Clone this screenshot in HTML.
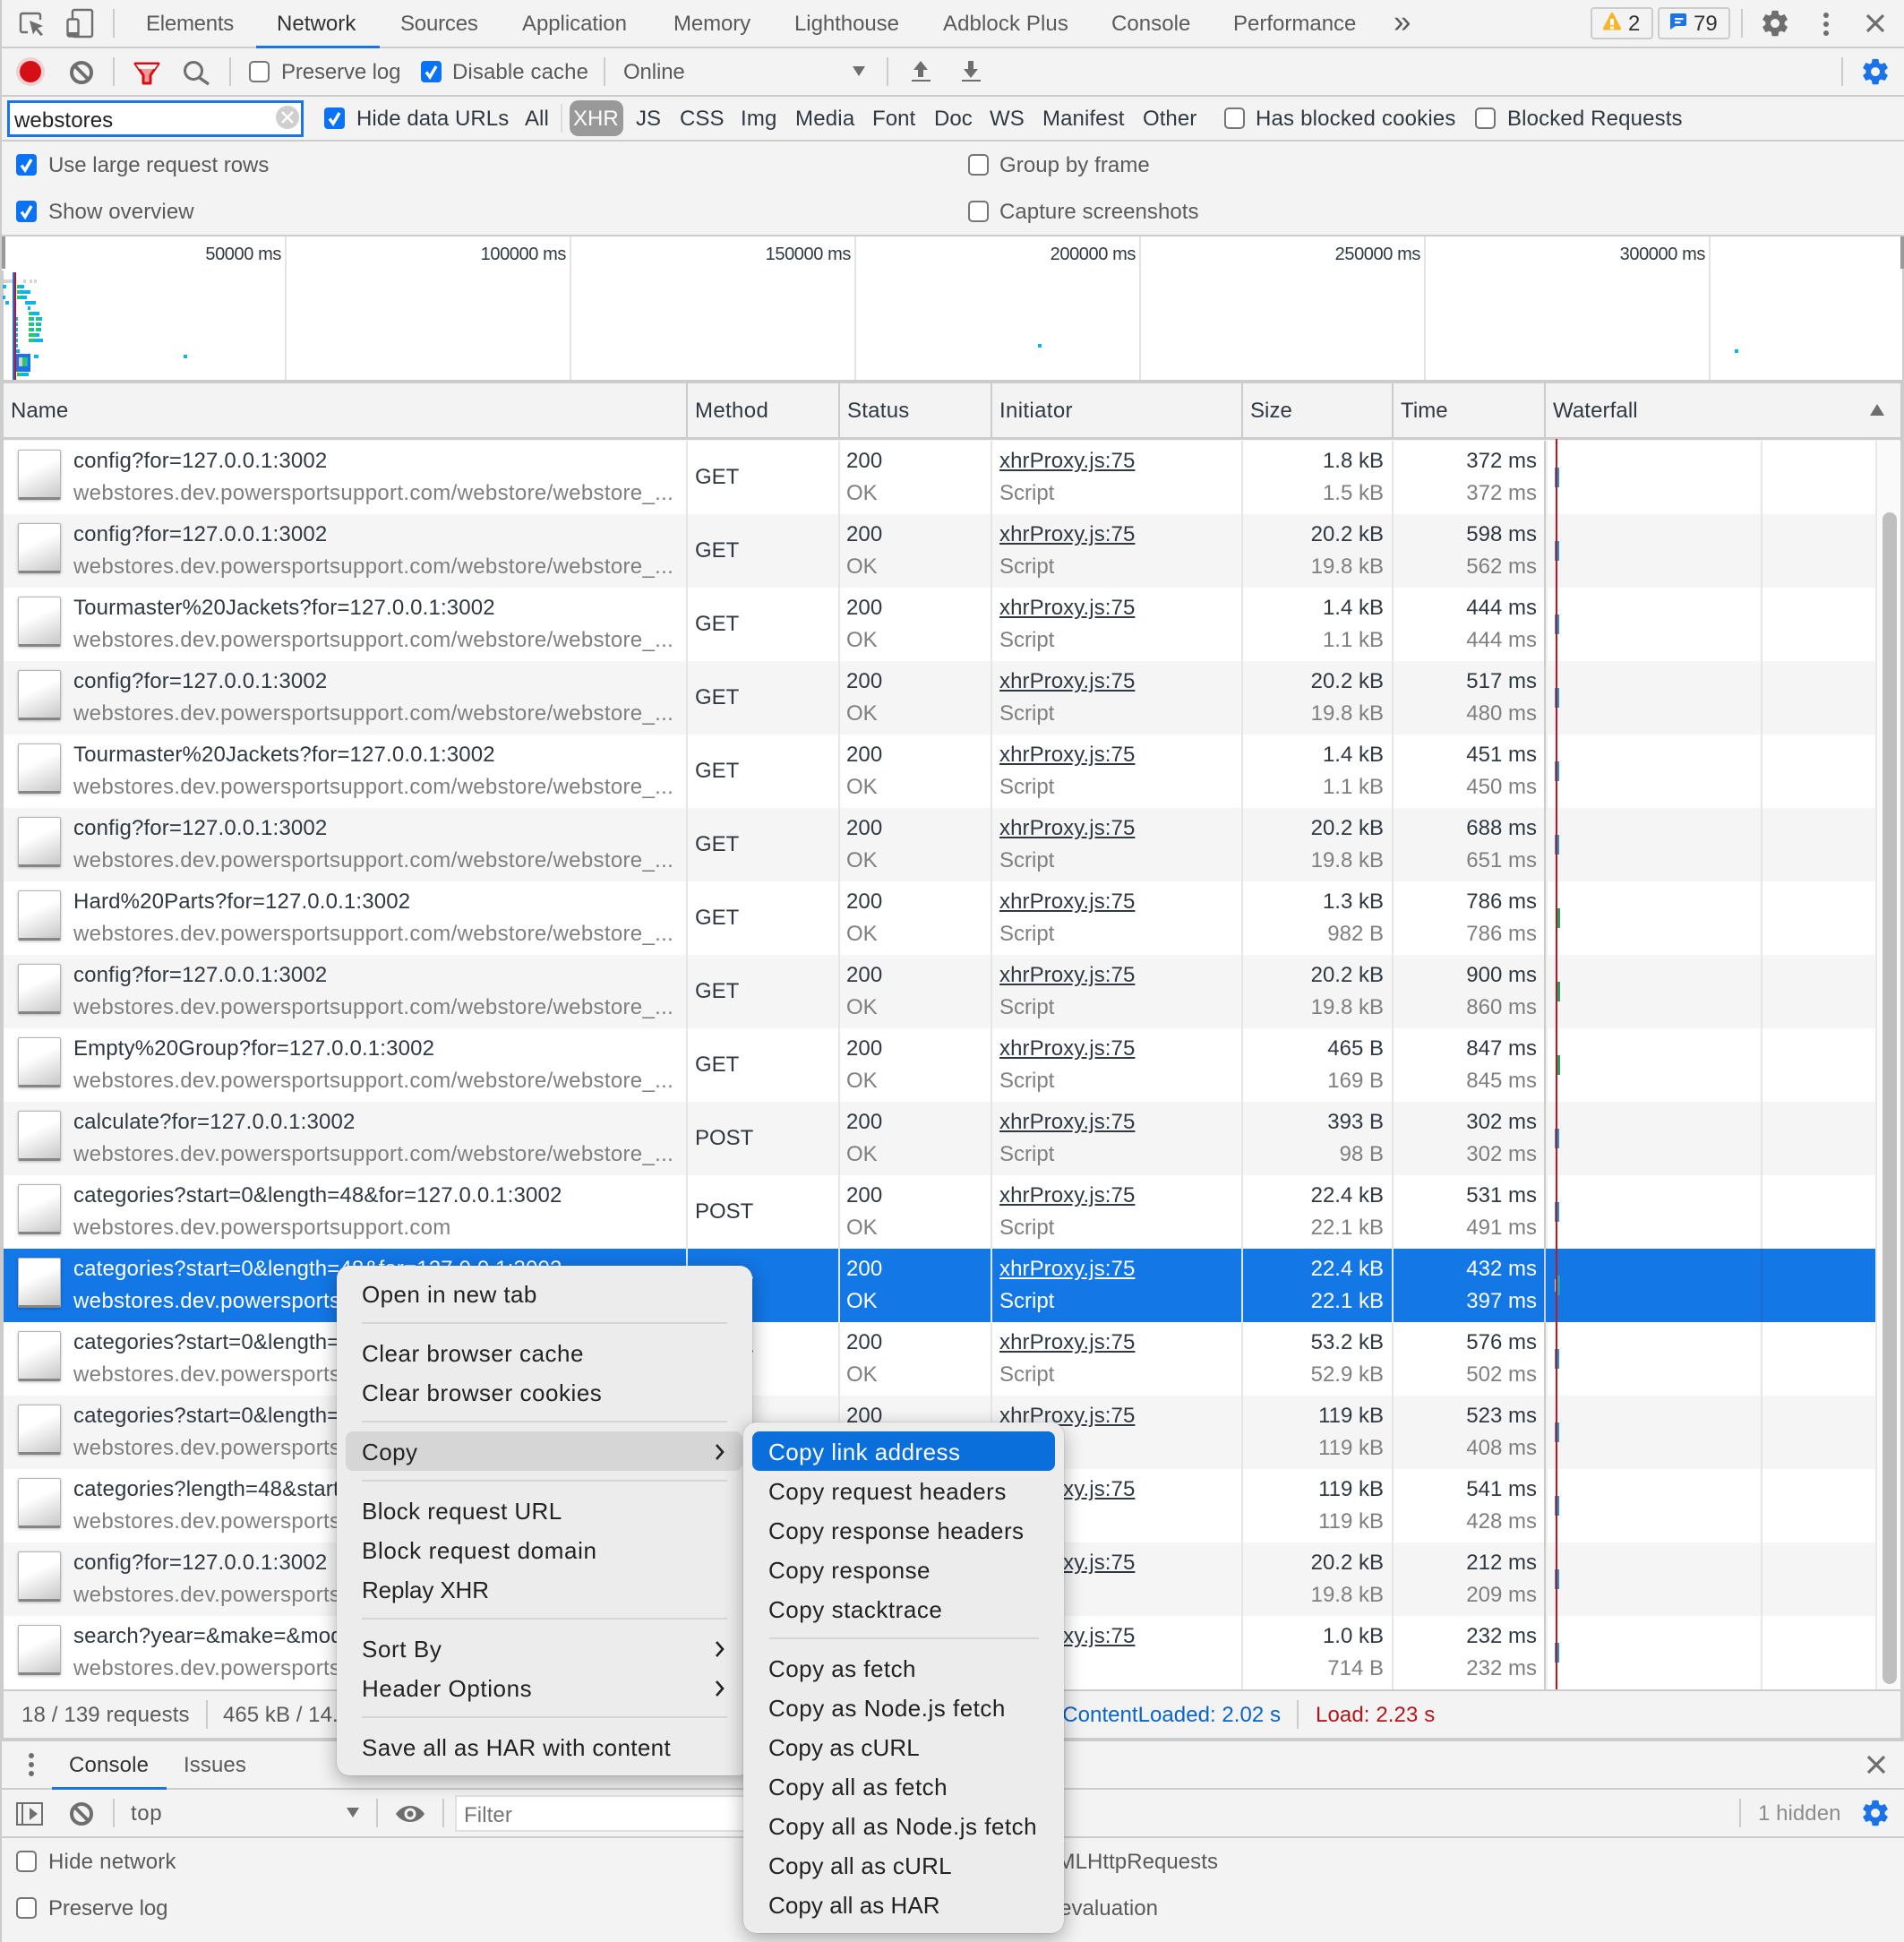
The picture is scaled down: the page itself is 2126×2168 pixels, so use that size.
<!DOCTYPE html>
<html><head><meta charset="utf-8"><title>DevTools Network</title>
<style>
html,body{margin:0;padding:0}
body{position:relative;width:2126px;height:2168px;overflow:hidden;background:#f3f3f3;font-family:"Liberation Sans",Arial,sans-serif;font-size:24px;color:#303942}
.t{position:absolute;white-space:nowrap;line-height:28px;height:28px;z-index:3;transform:translateY(1px)}
.b{position:absolute;z-index:2}
.tab{color:#5a5a5a;letter-spacing:-.05px}
.g{color:#5a5a5a;letter-spacing:.05px}
.k{color:#303942;letter-spacing:.05px}
.o{font-size:20px;letter-spacing:-.4px;width:150px;text-align:right;color:#303942}
.r{position:absolute;left:0;width:2094px;height:82px;background:#fff;z-index:1}
.r.e{background:#f5f5f5}
.r span{position:absolute;white-space:nowrap;line-height:28px;transform:translateY(1px)}
.n{left:82px;top:8px;letter-spacing:.15px}
.u{left:82px;top:44px;color:#7f7f7f;width:680px;overflow:hidden;letter-spacing:.32px}
.m{left:776px;top:26px}
.s1{left:945px;top:8px;letter-spacing:.08px}.s2{left:945px;top:44px;color:#7f7f7f}
.i1{left:1116px;top:8px;text-decoration:underline;letter-spacing:.08px}.i2{left:1116px;top:44px;color:#7f7f7f}
.z1{left:1395px;width:150px;top:8px;text-align:right}.z2{left:1395px;width:150px;top:44px;text-align:right;color:#7f7f7f}
.e1{left:1566px;width:150px;top:8px;text-align:right}.e2{left:1566px;width:150px;top:44px;text-align:right;color:#7f7f7f}
.r i{position:absolute;left:20px;top:10px;width:46px;height:52px;background:linear-gradient(155deg,#fff 40%,#c8c8c8 100%);border:1px solid #b4b4b4;border-bottom:3px solid #858585;border-radius:2px;box-shadow:0 1px 3px rgba(0,0,0,.25)}
.r b{position:absolute;left:1736px;top:30px;width:5px;height:22px;background:#1a9bd7}
.r b.gr{background:#1fa565;left:1738px;width:4px}
.sel{background:#1377e6;color:#fff}
.sel span{color:#fff!important}
.menu{position:absolute;background:#ececec;border-radius:14px;box-shadow:0 6px 22px rgba(0,0,0,.32),0 0 1px rgba(0,0,0,.4);z-index:6}
.mi{position:absolute;white-space:nowrap;line-height:32px;font-size:26px;letter-spacing:.43px;color:#222;z-index:8}
.ms{position:absolute;height:2px;background:#d6d6d6;z-index:8}
.hl{position:absolute;border-radius:8px;z-index:7}
svg.layer{position:absolute;left:0;top:0;z-index:2}
svg.top{position:absolute;left:0;top:0;z-index:8}
</style></head><body>

<!-- Backgrounds and bars -->
<div class="b" style="left:286px;top:51px;width:138px;height:3px;background:#1a73e8;z-index:3"></div>
<div class="b" style="left:0;top:52px;width:2126px;height:2px;background:#ccc"></div>
<div class="b" style="left:0;top:106px;width:2126px;height:2px;background:#ccc"></div>
<div class="b" style="left:0;top:156px;width:2126px;height:2px;background:#ccc"></div>
<div class="b" style="left:0;top:262px;width:2126px;height:2px;background:#ccc"></div>
<div class="b" style="left:0;top:264px;width:2126px;height:160px;background:#fff;z-index:1"></div>
<div class="b" style="left:0;top:424px;width:2126px;height:4px;background:#ccc"></div>
<div class="b" style="left:0;top:488px;width:2126px;height:3px;background:#ccc"></div>
<div class="b" style="left:2094px;top:492px;width:32px;height:1394px;background:#fafafa;z-index:1"></div>
<div class="b" style="left:2094px;top:492px;width:2px;height:1394px;background:#e8e8e8"></div>
<div class="b" style="left:2102px;top:572px;width:16px;height:1308px;background:#bfbfbf;border-radius:8px"></div>
<div class="b" style="left:0;top:1886px;width:2126px;height:2px;background:#ccc"></div>
<div class="b" style="left:0;top:1940px;width:2126px;height:4px;background:#ccc"></div>
<div class="b" style="left:0;top:1996px;width:2126px;height:2px;background:#ccc"></div>
<div class="b" style="left:58px;top:1995px;width:128px;height:3px;background:#1a73e8"></div>
<div class="b" style="left:0;top:2050px;width:2126px;height:2px;background:#ccc"></div>
<div class="b" style="left:0;top:0;width:2px;height:2168px;background:#ccc;z-index:4"></div>
<div class="b" style="left:0;top:302px;width:4px;height:1642px;background:#ccc;z-index:4"></div>
<div class="b" style="left:2122px;top:428px;width:4px;height:1516px;background:#ccc;z-index:4"></div>
<div class="b" style="left:2124px;top:264px;width:2px;height:164px;background:#ccc;z-index:4"></div>

<!-- Overview grid -->
<div class="b" style="left:318px;top:264px;width:2px;height:160px;background:#e4e4e4"></div>
<div class="b" style="left:636px;top:264px;width:2px;height:160px;background:#e4e4e4"></div>
<div class="b" style="left:954px;top:264px;width:2px;height:160px;background:#e4e4e4"></div>
<div class="b" style="left:1272px;top:264px;width:2px;height:160px;background:#e4e4e4"></div>
<div class="b" style="left:1590px;top:264px;width:2px;height:160px;background:#e4e4e4"></div>
<div class="b" style="left:1908px;top:264px;width:2px;height:160px;background:#e4e4e4"></div>
<div class="b" style="left:2px;top:264px;width:4px;height:36px;background:#999;z-index:4"></div>
<div class="b" style="left:2122px;top:264px;width:4px;height:36px;background:#999;z-index:4"></div>

<!-- Top tabs -->
<span class="t tab" style="left:163px;top:12px;letter-spacing:-.25px">Elements</span>
<span class="t tab" style="left:309px;top:12px;color:#333;letter-spacing:.05px">Network</span>
<span class="t tab" style="left:447px;top:12px;letter-spacing:-.2px">Sources</span>
<span class="t tab" style="left:583px;top:12px">Application</span>
<span class="t tab" style="left:752px;top:12px;letter-spacing:-.1px">Memory</span>
<span class="t tab" style="left:887px;top:12px">Lighthouse</span>
<span class="t tab" style="left:1053px;top:12px;letter-spacing:.1px">Adblock Plus</span>
<span class="t tab" style="left:1241px;top:12px;letter-spacing:.05px">Console</span>
<span class="t tab" style="left:1377px;top:12px;letter-spacing:0">Performance</span>
<span class="t tab" style="left:1556px;top:10px;font-size:35px">»</span>
<div class="b" style="left:1776px;top:8px;width:66px;height:32px;border:2px solid #ccc;border-radius:4px"></div>
<div class="b" style="left:1851px;top:8px;width:77px;height:32px;border:2px solid #ccc;border-radius:4px"></div>
<span class="t" style="left:1818px;top:12px;color:#333">2</span>
<span class="t" style="left:1891px;top:12px;color:#333">79</span>

<!-- Network toolbar -->
<span class="t g" style="left:314px;top:66px;letter-spacing:-.12px">Preserve log</span>
<span class="t g" style="left:505px;top:66px;letter-spacing:.1px">Disable cache</span>
<span class="t g" style="left:696px;top:66px;letter-spacing:-.12px">Online</span>

<!-- Filter bar -->
<div class="b" style="left:8px;top:112px;width:325px;height:35px;background:#fff;border:3px solid #1a73e8"></div>
<span class="t" style="left:16px;top:120px;color:#222;letter-spacing:.1px">webstores</span>
<span class="t k" style="left:398px;top:118px;letter-spacing:.06px">Hide data URLs</span>
<span class="t k" style="left:586px;top:118px">All</span>
<div class="b" style="left:636px;top:112px;width:60px;height:40px;background:#999;border-radius:10px"></div>
<span class="t" style="left:640px;top:118px;color:#fff">XHR</span>
<span class="t k" style="left:710px;top:118px">JS</span>
<span class="t k" style="left:759px;top:118px">CSS</span>
<span class="t k" style="left:827px;top:118px;letter-spacing:.2px">Img</span>
<span class="t k" style="left:888px;top:118px;letter-spacing:.2px">Media</span>
<span class="t k" style="left:974px;top:118px">Font</span>
<span class="t k" style="left:1043px;top:118px">Doc</span>
<span class="t k" style="left:1105px;top:118px">WS</span>
<span class="t k" style="left:1164px;top:118px;letter-spacing:.1px">Manifest</span>
<span class="t k" style="left:1276px;top:118px">Other</span>
<span class="t k" style="left:1402px;top:118px;letter-spacing:.18px">Has blocked cookies</span>
<span class="t k" style="left:1683px;top:118px;letter-spacing:.14px">Blocked Requests</span>

<!-- Settings -->
<span class="t g" style="left:54px;top:170px;letter-spacing:-.02px">Use large request rows</span>
<span class="t g" style="left:54px;top:222px;letter-spacing:.1px">Show overview</span>
<span class="t g" style="left:1116px;top:170px;letter-spacing:.08px">Group by frame</span>
<span class="t g" style="left:1116px;top:222px;letter-spacing:.06px">Capture screenshots</span>

<!-- Overview labels -->
<span class="t o" style="left:164px;top:269px">50000 ms</span>
<span class="t o" style="left:482px;top:269px">100000 ms</span>
<span class="t o" style="left:800px;top:269px">150000 ms</span>
<span class="t o" style="left:1118px;top:269px">200000 ms</span>
<span class="t o" style="left:1436px;top:269px">250000 ms</span>
<span class="t o" style="left:1754px;top:269px">300000 ms</span>

<!-- Table header -->
<span class="t k" style="left:12px;top:444px">Name</span>
<span class="t k" style="left:776px;top:444px;letter-spacing:.35px">Method</span>
<span class="t k" style="left:946px;top:444px;letter-spacing:.25px">Status</span>
<span class="t k" style="left:1116px;top:444px;letter-spacing:.35px">Initiator</span>
<span class="t k" style="left:1396px;top:444px">Size</span>
<span class="t k" style="left:1564px;top:444px">Time</span>
<span class="t k" style="left:1734px;top:444px;letter-spacing:.1px">Waterfall</span>

<!-- Rows -->
<div class="r" style="top:492px"><i></i><span class="n">config?for=127.0.0.1:3002</span><span class="u">webstores.dev.powersportsupport.com/webstore/webstore_...</span><span class="m">GET</span><span class="s1">200</span><span class="s2">OK</span><span class="i1">xhrProxy.js:75</span><span class="i2">Script</span><span class="z1">1.8 kB</span><span class="z2">1.5 kB</span><span class="e1">372 ms</span><span class="e2">372 ms</span><b></b></div>
<div class="r e" style="top:574px"><i></i><span class="n">config?for=127.0.0.1:3002</span><span class="u">webstores.dev.powersportsupport.com/webstore/webstore_...</span><span class="m">GET</span><span class="s1">200</span><span class="s2">OK</span><span class="i1">xhrProxy.js:75</span><span class="i2">Script</span><span class="z1">20.2 kB</span><span class="z2">19.8 kB</span><span class="e1">598 ms</span><span class="e2">562 ms</span><b></b></div>
<div class="r" style="top:656px"><i></i><span class="n">Tourmaster%20Jackets?for=127.0.0.1:3002</span><span class="u">webstores.dev.powersportsupport.com/webstore/webstore_...</span><span class="m">GET</span><span class="s1">200</span><span class="s2">OK</span><span class="i1">xhrProxy.js:75</span><span class="i2">Script</span><span class="z1">1.4 kB</span><span class="z2">1.1 kB</span><span class="e1">444 ms</span><span class="e2">444 ms</span><b></b></div>
<div class="r e" style="top:738px"><i></i><span class="n">config?for=127.0.0.1:3002</span><span class="u">webstores.dev.powersportsupport.com/webstore/webstore_...</span><span class="m">GET</span><span class="s1">200</span><span class="s2">OK</span><span class="i1">xhrProxy.js:75</span><span class="i2">Script</span><span class="z1">20.2 kB</span><span class="z2">19.8 kB</span><span class="e1">517 ms</span><span class="e2">480 ms</span><b></b></div>
<div class="r" style="top:820px"><i></i><span class="n">Tourmaster%20Jackets?for=127.0.0.1:3002</span><span class="u">webstores.dev.powersportsupport.com/webstore/webstore_...</span><span class="m">GET</span><span class="s1">200</span><span class="s2">OK</span><span class="i1">xhrProxy.js:75</span><span class="i2">Script</span><span class="z1">1.4 kB</span><span class="z2">1.1 kB</span><span class="e1">451 ms</span><span class="e2">450 ms</span><b></b></div>
<div class="r e" style="top:902px"><i></i><span class="n">config?for=127.0.0.1:3002</span><span class="u">webstores.dev.powersportsupport.com/webstore/webstore_...</span><span class="m">GET</span><span class="s1">200</span><span class="s2">OK</span><span class="i1">xhrProxy.js:75</span><span class="i2">Script</span><span class="z1">20.2 kB</span><span class="z2">19.8 kB</span><span class="e1">688 ms</span><span class="e2">651 ms</span><b></b></div>
<div class="r" style="top:984px"><i></i><span class="n">Hard%20Parts?for=127.0.0.1:3002</span><span class="u">webstores.dev.powersportsupport.com/webstore/webstore_...</span><span class="m">GET</span><span class="s1">200</span><span class="s2">OK</span><span class="i1">xhrProxy.js:75</span><span class="i2">Script</span><span class="z1">1.3 kB</span><span class="z2">982 B</span><span class="e1">786 ms</span><span class="e2">786 ms</span><b class="gr"></b></div>
<div class="r e" style="top:1066px"><i></i><span class="n">config?for=127.0.0.1:3002</span><span class="u">webstores.dev.powersportsupport.com/webstore/webstore_...</span><span class="m">GET</span><span class="s1">200</span><span class="s2">OK</span><span class="i1">xhrProxy.js:75</span><span class="i2">Script</span><span class="z1">20.2 kB</span><span class="z2">19.8 kB</span><span class="e1">900 ms</span><span class="e2">860 ms</span><b class="gr"></b></div>
<div class="r" style="top:1148px"><i></i><span class="n">Empty%20Group?for=127.0.0.1:3002</span><span class="u">webstores.dev.powersportsupport.com/webstore/webstore_...</span><span class="m">GET</span><span class="s1">200</span><span class="s2">OK</span><span class="i1">xhrProxy.js:75</span><span class="i2">Script</span><span class="z1">465 B</span><span class="z2">169 B</span><span class="e1">847 ms</span><span class="e2">845 ms</span><b class="gr"></b></div>
<div class="r e" style="top:1230px"><i></i><span class="n">calculate?for=127.0.0.1:3002</span><span class="u">webstores.dev.powersportsupport.com/webstore/webstore_...</span><span class="m">POST</span><span class="s1">200</span><span class="s2">OK</span><span class="i1">xhrProxy.js:75</span><span class="i2">Script</span><span class="z1">393 B</span><span class="z2">98 B</span><span class="e1">302 ms</span><span class="e2">302 ms</span><b></b></div>
<div class="r" style="top:1312px"><i></i><span class="n">categories?start=0&amp;length=48&amp;for=127.0.0.1:3002</span><span class="u">webstores.dev.powersportsupport.com</span><span class="m">POST</span><span class="s1">200</span><span class="s2">OK</span><span class="i1">xhrProxy.js:75</span><span class="i2">Script</span><span class="z1">22.4 kB</span><span class="z2">22.1 kB</span><span class="e1">531 ms</span><span class="e2">491 ms</span><b></b></div>
<div class="r sel" style="top:1394px;z-index:2"><i></i><span class="n">categories?start=0&amp;length=48&amp;for=127.0.0.1:3002</span><span class="u">webstores.dev.powersportsupport.com</span><span class="m">POST</span><span class="s1">200</span><span class="s2">OK</span><span class="i1">xhrProxy.js:75</span><span class="i2">Script</span><span class="z1">22.4 kB</span><span class="z2">22.1 kB</span><span class="e1">432 ms</span><span class="e2">397 ms</span></div>
<div class="r" style="top:1476px"><i></i><span class="n">categories?start=0&amp;length=48&amp;for=127.0.0.1:3002</span><span class="u">webstores.dev.powersportsupport.com</span><span class="m">POST</span><span class="s1">200</span><span class="s2">OK</span><span class="i1">xhrProxy.js:75</span><span class="i2">Script</span><span class="z1">53.2 kB</span><span class="z2">52.9 kB</span><span class="e1">576 ms</span><span class="e2">502 ms</span><b></b></div>
<div class="r e" style="top:1558px"><i></i><span class="n">categories?start=0&amp;length=48&amp;for=127.0.0.1:3002</span><span class="u">webstores.dev.powersportsupport.com</span><span class="m">POST</span><span class="s1">200</span><span class="s2">OK</span><span class="i1">xhrProxy.js:75</span><span class="i2">Script</span><span class="z1">119 kB</span><span class="z2">119 kB</span><span class="e1">523 ms</span><span class="e2">408 ms</span><b></b></div>
<div class="r" style="top:1640px"><i></i><span class="n">categories?length=48&amp;start=0&amp;for=127.0.0.1:3002</span><span class="u">webstores.dev.powersportsupport.com</span><span class="m">POST</span><span class="s1">200</span><span class="s2">OK</span><span class="i1">xhrProxy.js:75</span><span class="i2">Script</span><span class="z1">119 kB</span><span class="z2">119 kB</span><span class="e1">541 ms</span><span class="e2">428 ms</span><b></b></div>
<div class="r e" style="top:1722px"><i></i><span class="n">config?for=127.0.0.1:3002</span><span class="u">webstores.dev.powersportsupport.com</span><span class="m">GET</span><span class="s1">200</span><span class="s2">OK</span><span class="i1">xhrProxy.js:75</span><span class="i2">Script</span><span class="z1">20.2 kB</span><span class="z2">19.8 kB</span><span class="e1">212 ms</span><span class="e2">209 ms</span><b></b></div>
<div class="r" style="top:1804px"><i></i><span class="n">search?year=&amp;make=&amp;model=&amp;for=127.0.0.1:3002</span><span class="u">webstores.dev.powersportsupport.com</span><span class="m">POST</span><span class="s1">200</span><span class="s2">OK</span><span class="i1">xhrProxy.js:75</span><span class="i2">Script</span><span class="z1">1.0 kB</span><span class="z2">714 B</span><span class="e1">232 ms</span><span class="e2">232 ms</span><b></b></div>

<!-- Status bar -->
<span class="t k" style="left:24px;top:1900px;color:#5a5a5a;letter-spacing:.13px">18 / 139 requests</span>
<span class="t k" style="left:249px;top:1900px;color:#5a5a5a">465 kB / 14.4 MB transferred</span>
<span class="t" style="left:1030px;top:1900px;width:400px;text-align:right;color:#0a64c8;letter-spacing:.04px">DOMContentLoaded: 2.02 s</span>
<span class="t" style="left:1469px;top:1900px;color:#b3161b;letter-spacing:.1px">Load: 2.23 s</span>

<!-- Drawer -->
<span class="t" style="left:77px;top:1956px;color:#333;letter-spacing:.15px">Console</span>
<span class="t tab" style="left:205px;top:1956px;letter-spacing:.1px">Issues</span>
<span class="t g" style="left:146px;top:2010px;letter-spacing:.6px">top</span>
<div class="b" style="left:508px;top:2004px;width:600px;height:37px;background:#fff;border:2px solid #e0e0e0"></div>
<span class="t" style="left:518px;top:2012px;color:#757575;letter-spacing:.1px">Filter</span>
<span class="t" style="left:1963px;top:2010px;color:#8c8c8c;letter-spacing:.05px">1 hidden</span>
<span class="t g" style="left:54px;top:2064px;letter-spacing:.22px">Hide network</span>
<span class="t g" style="left:54px;top:2116px;letter-spacing:-.12px">Preserve log</span>
<span class="t g" style="left:960px;top:2064px;width:400px;text-align:right">Log XMLHttpRequests</span>
<span class="t g" style="left:893px;top:2116px;width:400px;text-align:right">Eager evaluation</span>

<!-- Icons and overview marks -->
<svg class="layer" width="2126" height="2168" viewBox="0 0 2126 2168" style="z-index:4" xmlns="http://www.w3.org/2000/svg">
<defs>
<path id="gear" d="M19.43 12.98c.04-.32.07-.64.07-.98s-.03-.66-.07-.98l2.11-1.65c.19-.15.24-.42.12-.64l-2-3.46c-.12-.22-.39-.3-.61-.22l-2.49 1c-.52-.4-1.08-.73-1.69-.98l-.38-2.65C14.46 2.18 14.25 2 14 2h-4c-.25 0-.46.18-.49.42l-.38 2.65c-.61.25-1.17.59-1.69.98l-2.49-1c-.23-.09-.49 0-.61.22l-2 3.46c-.13.22-.07.49.12.64l2.11 1.65c-.04.32-.07.65-.07.98s.03.66.07.98l-2.11 1.65c-.19.15-.24.42-.12.64l2 3.46c.12.22.39.3.61.22l2.49-1c.52.4 1.08.73 1.69.98l.38 2.65c.03.24.24.42.49.42h4c.25 0 .46-.18.49-.42l.38-2.65c.61-.25 1.17-.59 1.69-.98l2.49 1c.23.09.49 0 .61-.22l2-3.46c.12-.22.07-.49-.12-.64l-2.11-1.65zM12 15.5c-1.93 0-3.5-1.57-3.5-3.5s1.57-3.5 3.5-3.5 3.5 1.57 3.5 3.5-1.57 3.5-3.5 3.5z"/>
<g id="cb"><rect x="1" y="1" width="21" height="22" rx="4" fill="#fff" stroke="#757575" stroke-width="2"/></g>
<g id="cc"><rect x="0" y="0" width="23" height="24" rx="4" fill="#0a72f5"/><path d="M6 12.5l4 5.5 7-12" fill="none" stroke="#fff" stroke-width="3.4"/></g>
<g id="blk"><circle cx="0" cy="0" r="11" fill="none" stroke="#6e6e6e" stroke-width="4"/><path d="M-8 -8L8 8" stroke="#6e6e6e" stroke-width="4"/></g>
</defs>

<!-- top toolbar -->
<path d="M31 36H25a2 2 0 0 1-2-2V17a2 2 0 0 1 2-2h18a2 2 0 0 1 2 2v5" fill="none" stroke="#6e6e6e" stroke-width="2.4"/>
<path d="M33 23l15 6-6 2.5 6 7-2.5 1.5-5.5-6.5-3 5z" fill="#6e6e6e"/>
<rect x="81" y="11" width="22" height="30" rx="2" fill="none" stroke="#6e6e6e" stroke-width="2.4"/>
<rect x="75.5" y="21.5" width="12" height="19" rx="2" fill="#f3f3f3" stroke="#6e6e6e" stroke-width="2.4"/>
<rect x="75" y="36" width="13" height="5" fill="#6e6e6e"/>
<rect x="126" y="10" width="2" height="32" fill="#ccc"/>
<path d="M1800 15.5l8.6 16.5h-17.2z" fill="#f4b62b" stroke="#f4b62b" stroke-width="3" stroke-linejoin="round"/>
<rect x="1798" y="21" width="4" height="7" fill="#fff"/><rect x="1798" y="29.5" width="4" height="3" fill="#fff"/>
<path d="M1867 15h14a2 2 0 0 1 2 2v10a2 2 0 0 1-2 2h-10l-6 4V17a2 2 0 0 1 2-2z" fill="#1a73e8"/>
<rect x="1870" y="20" width="9.5" height="2.2" fill="#fff"/><rect x="1870" y="24" width="6.5" height="2.2" fill="#fff"/>
<rect x="1944" y="10" width="2" height="32" fill="#ccc"/>
<use href="#gear" transform="translate(1965 9) scale(1.42)" fill="#6e6e6e"/>
<circle cx="2039" cy="17" r="3" fill="#6e6e6e"/><circle cx="2039" cy="27" r="3" fill="#6e6e6e"/><circle cx="2039" cy="37" r="3" fill="#6e6e6e"/>
<path d="M2085 17l18 18M2103 17l-18 18" stroke="#6e6e6e" stroke-width="3.2"/>

<!-- network toolbar -->
<circle cx="34" cy="80" r="16" fill="#e02020" opacity=".16"/>
<circle cx="34" cy="80" r="12" fill="#d50f15"/>
<use href="#blk" transform="translate(91 81)"/>
<rect x="126" y="64" width="2" height="32" fill="#ccc"/>
<path d="M151 71h26l-9 13v9h-8v-9z" fill="#ef9a9a" stroke="#d50f15" stroke-width="3" stroke-linejoin="round"/>
<path d="M152 72h24l-3.5 5h-17z" fill="#f3f3f3"/>
<circle cx="216" cy="79" r="9.5" fill="none" stroke="#6e6e6e" stroke-width="3"/><path d="M223 87l10 7" stroke="#6e6e6e" stroke-width="3.4"/>
<rect x="256" y="64" width="2" height="32" fill="#ccc"/>
<use href="#cb" transform="translate(278 68)"/>
<use href="#cc" transform="translate(470 68)"/>
<rect x="674" y="64" width="2" height="32" fill="#ccc"/>
<path d="M952 74h14l-7 11z" fill="#6e6e6e"/>
<rect x="990" y="64" width="2" height="32" fill="#ccc"/>
<path d="M1028 68l8 10h-5v8h-6v-8h-5z" fill="#6e6e6e"/><rect x="1018" y="89" width="21" height="2" fill="#6e6e6e"/>
<path d="M1081 68h6v9h5l-8 10-8-10h5z" fill="#6e6e6e"/><rect x="1074" y="89" width="21" height="2" fill="#6e6e6e"/>
<rect x="2056" y="64" width="2" height="32" fill="#ccc"/>
<use href="#gear" transform="translate(2077 63) scale(1.42)" fill="#1a73e8"/>

<!-- filter bar -->
<circle cx="321" cy="131" r="13" fill="#cfcfcf"/><path d="M315 125l12 12M327 125l-12 12" stroke="#fff" stroke-width="2.4"/>
<use href="#cc" transform="translate(362 120)"/>
<rect x="626" y="116" width="2" height="32" fill="#ddd"/>
<use href="#cb" transform="translate(1367 120)"/>
<use href="#cb" transform="translate(1647 120)"/>

<!-- settings -->
<use href="#cc" transform="translate(18 172)"/>
<use href="#cc" transform="translate(18 224)"/>
<use href="#cb" transform="translate(1081 172)"/>
<use href="#cb" transform="translate(1081 224)"/>

<!-- overview marks -->
<g fill="#0ab4f0">
<rect x="3" y="318" width="4" height="4"/><rect x="22" y="318" width="5" height="4"/><rect x="22" y="324" width="12" height="4"/><rect x="3" y="330" width="3" height="4"/><rect x="23" y="330" width="7" height="4"/><rect x="6" y="336" width="4" height="4"/><rect x="28" y="336" width="12" height="4"/><rect x="31" y="342" width="3" height="4"/><rect x="36" y="348" width="8" height="4"/>
<rect x="18" y="354" width="2" height="4"/><rect x="36" y="354" width="2" height="4"/><rect x="44" y="354" width="3" height="4"/>
<rect x="18" y="360" width="2" height="4"/><rect x="36" y="360" width="2" height="4"/><rect x="44" y="360" width="2" height="4"/>
<rect x="18" y="366" width="2" height="4"/><rect x="36" y="366" width="2" height="4"/><rect x="44" y="366" width="2" height="4"/>
<rect x="18" y="372" width="2" height="4"/><rect x="40" y="372" width="4" height="4"/>
<rect x="18" y="378" width="2" height="4"/><rect x="38" y="378" width="10" height="4"/>
<rect x="18" y="384" width="2" height="4"/><rect x="18" y="390" width="4" height="4"/>
<rect x="38" y="396" width="5" height="4"/><rect x="205" y="396" width="4" height="4"/>
<rect x="1159" y="384" width="4" height="4"/><rect x="1937" y="390" width="4" height="4"/>
<rect x="24" y="416" width="8" height="4"/>
</g>
<g fill="#2cc56f">
<rect x="19" y="318" width="3" height="4"/><rect x="19" y="324" width="3" height="4"/><rect x="19" y="330" width="4" height="4"/><rect x="32" y="348" width="4" height="4"/>
<rect x="32" y="354" width="4" height="4"/><rect x="40" y="354" width="4" height="4"/><rect x="32" y="360" width="4" height="4"/><rect x="40" y="360" width="4" height="4"/><rect x="32" y="366" width="4" height="4"/><rect x="40" y="366" width="4" height="4"/><rect x="32" y="372" width="8" height="4"/><rect x="32" y="378" width="6" height="4"/><rect x="19" y="416" width="5" height="4"/>
</g>
<g fill="#d4d4d4"><rect x="4" y="312" width="10" height="4"/><rect x="26" y="312" width="3" height="4"/><rect x="33" y="312" width="3" height="4"/><rect x="38" y="312" width="3" height="4"/></g>
<rect x="18" y="395" width="16" height="20" fill="#1a73e8"/>
<rect x="21" y="399" width="4" height="10" fill="#d0d0d0"/><rect x="25" y="399" width="5" height="10" fill="#2cc56f"/><rect x="30" y="399" width="1" height="10" fill="#0ab4f0"/>
<rect x="14" y="304" width="2" height="120" fill="#1a73e8"/><rect x="16" y="304" width="2" height="120" fill="#c4131a"/>

<!-- column separators -->
<g fill="#ccc"><rect x="766" y="428" width="2" height="60"/><rect x="936" y="428" width="2" height="60"/><rect x="1106" y="428" width="2" height="60"/><rect x="1386" y="428" width="2" height="60"/><rect x="1554" y="428" width="2" height="60"/><rect x="1724" y="428" width="2" height="60"/></g>
<g fill="#e6e6e6"><rect x="766" y="492" width="2" height="1394"/><rect x="936" y="492" width="2" height="1394"/><rect x="1106" y="492" width="2" height="1394"/><rect x="1386" y="492" width="2" height="1394"/><rect x="1554" y="492" width="2" height="1394"/></g>
<rect x="1966" y="492" width="2" height="1394" fill="#e6e6e6"/>
<rect x="1724" y="492" width="2" height="1394" fill="#ccc"/>
<rect x="1726" y="492" width="2" height="902" fill="#f0f0f0"/><rect x="1726" y="1476" width="2" height="410" fill="#f0f0f0"/>
<g fill="#d9e7fb"><rect x="766" y="1394" width="2" height="82"/><rect x="936" y="1394" width="2" height="82"/><rect x="1106" y="1394" width="2" height="82"/><rect x="1386" y="1394" width="2" height="82"/><rect x="1554" y="1394" width="2" height="82"/></g>
<rect x="1966" y="1394" width="2" height="82" fill="#1c6cc8"/>
<rect x="1736" y="1428" width="1" height="14" fill="#d0d0d0"/>
<rect x="1739" y="1424" width="3" height="22" fill="#14a6c8"/>
<rect x="1737" y="490" width="2" height="1396" fill="#c4131a"/>
<path d="M2096 451l-8 13h16z" fill="#6e6e6e"/>

<!-- drawer -->
<circle cx="35" cy="1960" r="3" fill="#6e6e6e"/><circle cx="35" cy="1970" r="3" fill="#6e6e6e"/><circle cx="35" cy="1980" r="3" fill="#6e6e6e"/>
<path d="M2086 1961l18 18M2104 1961l-18 18" stroke="#6e6e6e" stroke-width="3.2"/>
<rect x="19" y="2013" width="28" height="24" fill="none" stroke="#6e6e6e" stroke-width="2"/><rect x="24" y="2013" width="2" height="24" fill="#6e6e6e"/><path d="M33 2018l9 7-9 7z" fill="#6e6e6e"/>
<use href="#blk" transform="translate(91 2025)"/>
<rect x="126" y="2008" width="2" height="32" fill="#ccc"/>
<path d="M387 2018h14l-7 11z" fill="#6e6e6e"/>
<rect x="420" y="2008" width="2" height="32" fill="#ccc"/>
<path d="M442 2025c4-6 10-9 16-9s12 3 16 9c-4 6-10 9-16 9s-12-3-16-9z" fill="#6e6e6e"/><circle cx="458" cy="2025" r="6.5" fill="#f3f3f3"/><circle cx="458" cy="2025" r="3.5" fill="#6e6e6e"/>
<rect x="494" y="2008" width="2" height="32" fill="#ccc"/>
<rect x="1942" y="2008" width="2" height="32" fill="#ccc"/>
<use href="#gear" transform="translate(2077 2007) scale(1.42)" fill="#1a73e8"/>
<use href="#cb" transform="translate(18 2066)"/>
<use href="#cb" transform="translate(18 2118)"/>
<!-- status separators -->
<rect x="230" y="1898" width="2" height="32" fill="#ccc"/><rect x="1448" y="1898" width="2" height="32" fill="#ccc"/>
</svg>

<!-- Context menu -->
<div class="menu" style="left:376px;top:1413px;width:464px;height:569px"></div>
<div class="hl" style="left:386px;top:1598px;width:443px;height:44px;background:#d6d6d6"></div>
<span class="mi" style="left:404px;top:1429px">Open in new tab</span>
<div class="ms" style="left:404px;top:1476px;width:408px"></div>
<span class="mi" style="left:404px;top:1495px;letter-spacing:.5px">Clear browser cache</span>
<span class="mi" style="left:404px;top:1539px;letter-spacing:.53px">Clear browser cookies</span>
<div class="ms" style="left:404px;top:1586px;width:408px"></div>
<span class="mi" style="left:404px;top:1605px">Copy</span>
<div class="ms" style="left:404px;top:1652px;width:408px"></div>
<span class="mi" style="left:404px;top:1671px;letter-spacing:.4px">Block request URL</span>
<span class="mi" style="left:404px;top:1715px;letter-spacing:.63px">Block request domain</span>
<span class="mi" style="left:404px;top:1759px;letter-spacing:-.12px">Replay XHR</span>
<div class="ms" style="left:404px;top:1806px;width:408px"></div>
<span class="mi" style="left:404px;top:1825px;letter-spacing:.6px">Sort By</span>
<span class="mi" style="left:404px;top:1869px;letter-spacing:.58px">Header Options</span>
<div class="ms" style="left:404px;top:1916px;width:408px"></div>
<span class="mi" style="left:404px;top:1935px;letter-spacing:.35px">Save all as HAR with content</span>

<!-- Copy submenu -->
<div class="menu" style="left:830px;top:1588px;width:358px;height:570px;z-index:9"></div>
<div class="hl" style="left:840px;top:1598px;width:338px;height:44px;background:#0a6edb;z-index:10"></div>
<span class="mi" style="left:858px;top:1605px;color:#fff;z-index:11;letter-spacing:.46px">Copy link address</span>
<span class="mi" style="left:858px;top:1649px;z-index:11;letter-spacing:.5px">Copy request headers</span>
<span class="mi" style="left:858px;top:1693px;z-index:11;letter-spacing:.45px">Copy response headers</span>
<span class="mi" style="left:858px;top:1737px;z-index:11;letter-spacing:.47px">Copy response</span>
<span class="mi" style="left:858px;top:1781px;z-index:11;letter-spacing:.53px">Copy stacktrace</span>
<div class="ms" style="left:859px;top:1828px;width:301px;z-index:11"></div>
<span class="mi" style="left:858px;top:1847px;z-index:11;letter-spacing:.46px">Copy as fetch</span>
<span class="mi" style="left:858px;top:1891px;z-index:11;letter-spacing:.5px">Copy as Node.js fetch</span>
<span class="mi" style="left:858px;top:1935px;z-index:11;letter-spacing:.1px">Copy as cURL</span>
<span class="mi" style="left:858px;top:1979px;z-index:11;letter-spacing:.46px">Copy all as fetch</span>
<span class="mi" style="left:858px;top:2023px;z-index:11;letter-spacing:.5px">Copy all as Node.js fetch</span>
<span class="mi" style="left:858px;top:2067px;z-index:11;letter-spacing:.25px">Copy all as cURL</span>
<span class="mi" style="left:858px;top:2111px;z-index:11;letter-spacing:.06px">Copy all as HAR</span>

<svg class="top" width="2126" height="2168" viewBox="0 0 2126 2168" xmlns="http://www.w3.org/2000/svg">
<g fill="none" stroke="#222" stroke-width="2.6"><path d="M800 1613l7 8-7 8"/><path d="M800 1833l7 8-7 8"/><path d="M800 1877l7 8-7 8"/></g>
</svg>
</body></html>
